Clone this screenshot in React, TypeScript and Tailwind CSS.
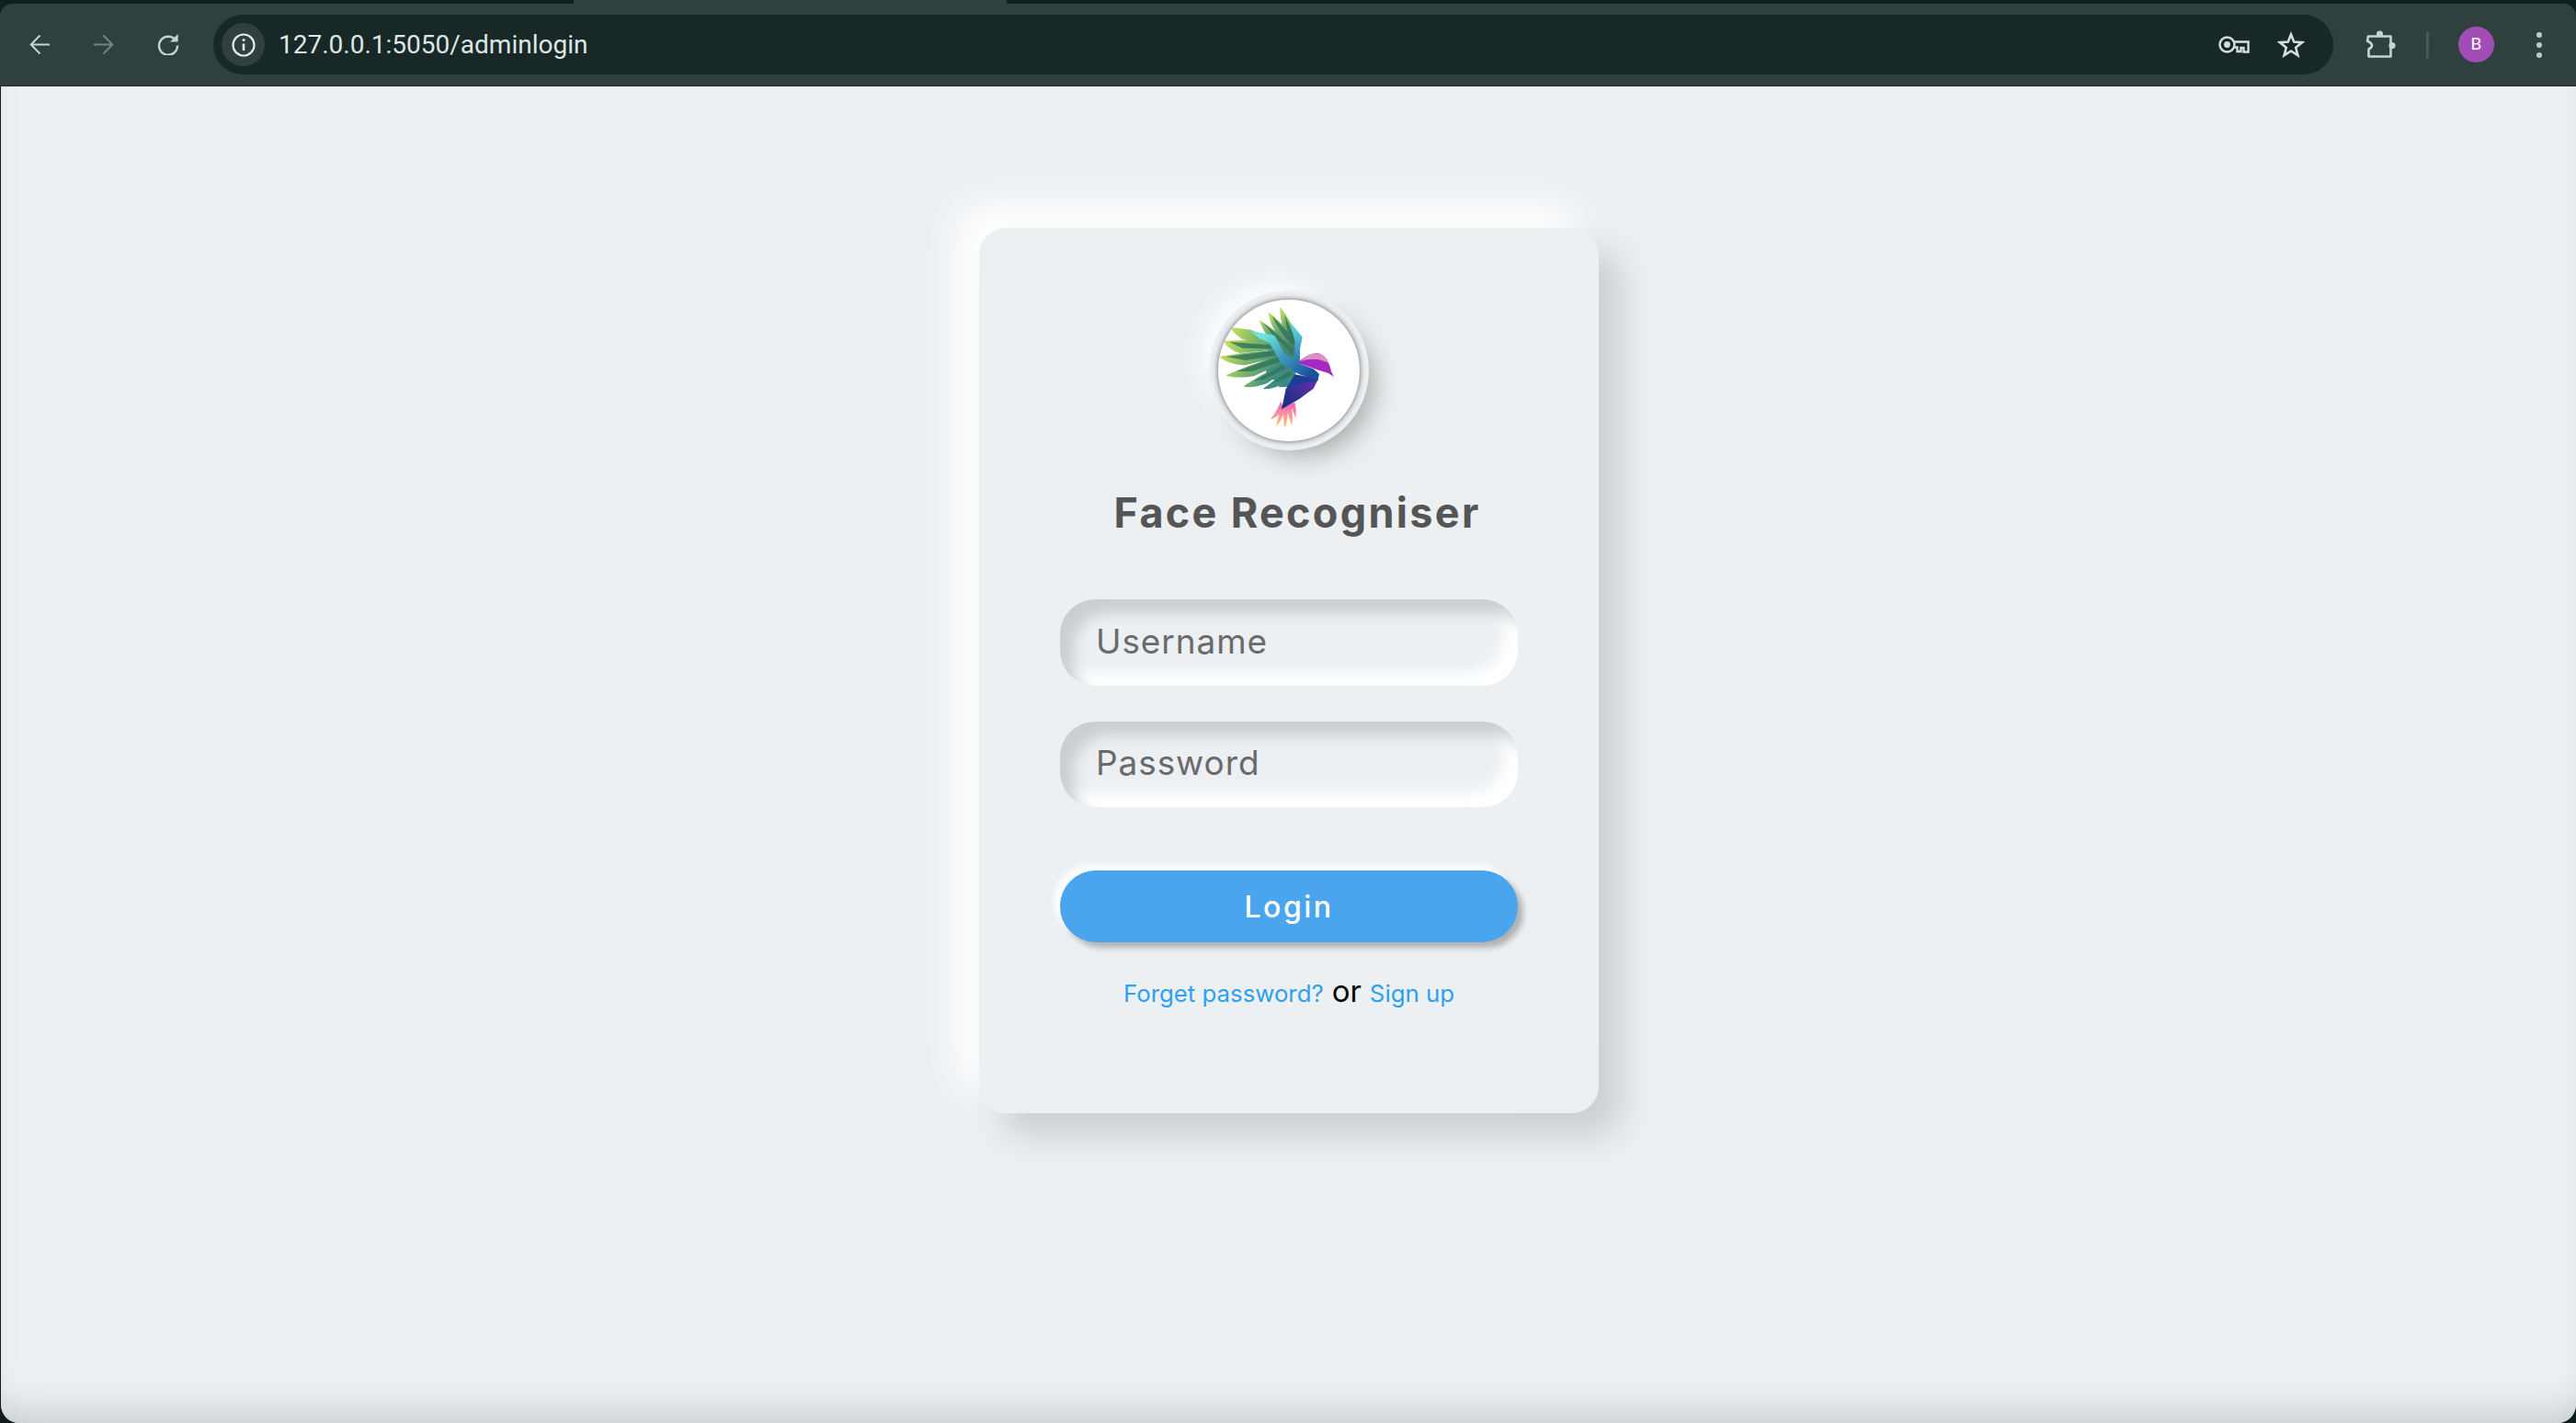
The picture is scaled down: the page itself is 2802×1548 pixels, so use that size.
import React from "react";

function Bird({ id }: { id: string }) {
  const lower = [
    "M178 170 L240 178 L330 212 L302 226 L215 205 Q190 190 178 170Z",
    "M155 214 L240 212 L305 226 L312 240 L205 250 Q172 240 155 214Z",
    "M142 265 L215 254 L322 244 L328 264 L222 290 Q170 288 142 265Z",
    "M165 325 L230 298 L330 264 L342 284 L250 326 Q200 334 165 325Z",
    "M222 360 L270 330 L345 290 L358 305 L292 350 Q255 364 222 360Z",
    "M285 368 L330 335 L366 310 L386 322 L350 350 Q315 368 285 368Z",
    "M335 362 L385 322 L388 340 L362 360Z",
  ];
  const upper = [
    "M338 105 Q370 140 386 205 L376 228 Q338 170 338 105Z",
    "M300 120 Q345 155 386 208 L382 242 Q310 190 300 120Z",
    "M272 148 Q325 178 382 238 L380 264 Q295 220 272 148Z",
  ];
  const stripes = [
    "M172 216 L305 226 L312 238 L215 236Z",
    "M160 264 L320 244 L326 260 L225 276Z",
    "M195 312 L330 264 L340 280 L245 312Z",
    "M250 345 L345 291 L356 303 L285 338Z",
    "M305 352 L366 311 L382 322 L340 342Z",
    "M352 128 L386 205 L378 222 Q358 180 352 128Z",
    "M310 130 L386 208 L382 234 Q335 185 310 130Z",
    "M282 154 L382 238 L380 256 Q325 212 282 154Z",
  ];
  const tail = [
    "M340 410 Q325 445 305 468 Q335 462 348 432Z",
    "M342 430 Q328 465 325 492 Q345 470 355 432Z",
    "M350 430 Q345 470 352 497 Q365 470 362 425Z",
    "M358 425 Q365 465 375 487 Q382 460 372 420Z",
    "M368 420 Q380 440 388 465 Q392 440 385 413Z",
  ];
  return (
    <svg viewBox="135 78 462 462" className="block h-full w-full">
      <defs>
        <linearGradient id={`${id}fe`} gradientUnits="userSpaceOnUse" x1="150" y1="200" x2="370" y2="290">
          <stop offset="0" stopColor="#d2e55a" />
          <stop offset="0.4" stopColor="#84ba66" />
          <stop offset="0.85" stopColor="#3f9080" />
          <stop offset="1" stopColor="#3a8a88" />
        </linearGradient>
        <linearGradient id={`${id}upg`} gradientUnits="userSpaceOnUse" x1="320" y1="105" x2="375" y2="255">
          <stop offset="0" stopColor="#d6e85f" />
          <stop offset="0.45" stopColor="#6aa96c" />
          <stop offset="1" stopColor="#3b7f70" />
        </linearGradient>
        <linearGradient id={`${id}band`} gradientUnits="userSpaceOnUse" x1="290" y1="190" x2="430" y2="330">
          <stop offset="0" stopColor="#6fe5e2" />
          <stop offset="0.45" stopColor="#3f9cc0" />
          <stop offset="1" stopColor="#1b4f9e" />
        </linearGradient>
        <linearGradient id={`${id}up`} gradientUnits="userSpaceOnUse" x1="390" y1="150" x2="395" y2="285">
          <stop offset="0" stopColor="#66e3e3" />
          <stop offset="1" stopColor="#2c73b5" />
        </linearGradient>
        <linearGradient id={`${id}body`} gradientUnits="userSpaceOnUse" x1="450" y1="330" x2="350" y2="430">
          <stop offset="0" stopColor="#6d2db0" />
          <stop offset="1" stopColor="#12307f" />
        </linearGradient>
        <linearGradient id={`${id}tail`} gradientUnits="userSpaceOnUse" x1="350" y1="410" x2="350" y2="495">
          <stop offset="0" stopColor="#ee55b5" />
          <stop offset="0.55" stopColor="#fb9aa0" />
          <stop offset="1" stopColor="#fdd04f" />
        </linearGradient>
      </defs>
      <path d="M300 225 L385 205 L400 290 L385 325 L350 352 L290 330Z" fill="#3f8a78" />
      {lower.map((d) => (
        <path key={d} d={d} fill={`url(#${id}fe)`} stroke={`url(#${id}fe)`} strokeWidth="4" strokeLinejoin="round" />
      ))}
      {upper.map((d) => (
        <path key={d} d={d} fill={`url(#${id}upg)`} stroke={`url(#${id}upg)`} strokeWidth="3" strokeLinejoin="round" />
      ))}
      {stripes.map((d) => (
        <path key={d} d={d} fill="#35755c" opacity="0.85" />
      ))}
      {tail.map((d) => (
        <path key={d} d={d} fill={`url(#${id}tail)`} />
      ))}
      <path d="M385 325 L462 336 L446 368 L400 402 L342 436 L356 370Z" fill={`url(#${id}body)`} />
      <path d="M356 372 L385 322 L462 336 L456 346 Q400 345 356 372Z" fill="#1d3c96" />
      <path d="M368 148 L410 200 L402 240 L402 285 L384 276 L386 215Z" fill={`url(#${id}up)`} />
      <path d="M238 179 L320 195 L332 218 L348 250 L396 285 L446 304 L465 320 L460 342 L400 322 L342 287 L316 242 L304 220 L270 205Z" fill={`url(#${id}band)`} strokeLinejoin="round" />
      <path d="M396 285 Q420 256 456 252 Q492 256 504 312 L513 330 L495 318 L464 308Z" fill="#a42abf" />
      <path d="M405 278 Q425 256 456 252 Q484 254 497 285 Q470 272 445 272 Q425 272 405 278Z" fill="#de8fc4" />
    </svg>
  );
}

function IconBack({ className }: { className: string }) {
  return (
    <svg viewBox="0 0 24 24" className={className} fill="none" stroke="currentColor" strokeWidth="2.1">
      <path d="M23 12H2M12 1.5 1.8 12 12 22.5" />
    </svg>
  );
}

function IconReload() {
  return (
    <svg viewBox="0 0 24 24" className="-mt-[2px] h-[24px] w-[24px] text-[#c3d5d1]" fill="none" stroke="currentColor" strokeWidth="2.4">
      <path d="M20.5 8.5A10 10 0 1 0 22 13.5" />
      <path d="M22.6 1v8.6H14" fill="currentColor" stroke="none" />
    </svg>
  );
}

function IconInfo() {
  return (
    <svg viewBox="0 0 26 26" className="h-[26px] w-[26px] text-[#e4ebe9]" fill="none" stroke="currentColor" strokeWidth="2.2">
      <circle cx="13" cy="13" r="11.5" />
      <path d="M13 11.5V19" strokeWidth="2.6" />
      <circle cx="13" cy="7.6" r="1.5" fill="currentColor" stroke="none" />
    </svg>
  );
}

function IconKey() {
  return (
    <svg viewBox="0 0 34 20" className="h-[20px] w-[34px] text-[#d3dfdc]" fill="none" stroke="currentColor" strokeWidth="2.4">
      <circle cx="9.5" cy="9.5" r="8" />
      <circle cx="9.5" cy="9.5" r="3.4" fill="currentColor" stroke="none" />
      <path d="M17.5 6.5H32.6V17.5H27.5V13H24.5V17H20.5V12.5H17.5" />
    </svg>
  );
}

function IconStar() {
  return (
    <svg viewBox="0 0 30 29" className="h-[29px] w-[30px] text-[#d3dfdc]" fill="none" stroke="currentColor" strokeWidth="2.6" strokeLinejoin="miter">
      <path d="M15 3.5 18.2 11.6 27 12.2 20.2 17.8 22.4 26.2 15 21.5 7.6 26.2 9.8 17.8 3 12.2 11.8 11.6Z" />
    </svg>
  );
}

function IconPuzzle() {
  return (
    <svg viewBox="0 0 33 32" className="h-[32px] w-[33px] text-[#c3d5d1]" fill="none" stroke="currentColor" strokeWidth="2.6" strokeLinejoin="round">
      <path d="M3 6.5H27.5V28.5H3.5V20.5Q7.5 18.5 7 16T2 11.5Z" />
      <circle cx="15.5" cy="4" r="3.6" fill="currentColor" stroke="none" />
      <circle cx="29" cy="16.5" r="3.6" fill="currentColor" stroke="none" />
    </svg>
  );
}

export default function App() {
  return (
    <div className="flex h-[1548px] w-[2802px] flex-col overflow-hidden bg-[#101c1b] font-['Inter',sans-serif]">
      <header className="h-[94px] shrink-0 bg-[#0f211f]">
        <div className="flex h-[4px]">
          <div className="w-[624px]" />
          <div className="w-[471px] bg-[#2f403e]" />
        </div>
        <div className="flex h-[90px] items-center rounded-t-[14px] border-b border-b-[#1c2725] bg-[#2f403e]">
          <div className="flex w-[232px] shrink-0 items-center pl-[32px]">
            <IconBack className="h-[23px] w-[23px] text-[#c3d5d1]" />
            <div className="ml-[46px] rotate-180">
              <IconBack className="h-[23px] w-[23px] text-[#6e8581]" />
            </div>
            <div className="ml-[47px]">
              <IconReload />
            </div>
          </div>
          <div className="flex h-[65px] w-[2306px] shrink-0 items-center rounded-full bg-[#182827] pl-[9px] pr-[31px]">
            <div className="flex h-[47px] w-[47px] items-center justify-center rounded-full bg-[#2f403e]">
              <IconInfo />
            </div>
            <span className="ml-[15px] font-['Roboto',sans-serif] text-[28px] leading-none text-[#dfe6e4]">127.0.0.1:5050/adminlogin</span>
            <div className="ml-auto flex items-center gap-[30px]">
              <IconKey />
              <IconStar />
            </div>
          </div>
          <div className="ml-[35px]">
            <IconPuzzle />
          </div>
          <div className="ml-[33px] h-[30px] w-[3px] rounded-full bg-[#475a57]" />
          <div className="ml-[32px] flex h-[39px] w-[39px] items-center justify-center rounded-full bg-[#a14db5] font-['Roboto',sans-serif] text-[19px] text-white">B</div>
          <div className="ml-[46px] flex flex-col gap-[5px]">
            <div className="h-[6px] w-[6px] rounded-full bg-[#b9ccc8]" />
            <div className="h-[6px] w-[6px] rounded-full bg-[#b9ccc8]" />
            <div className="h-[6px] w-[6px] rounded-full bg-[#b9ccc8]" />
          </div>
        </div>
      </header>

      <main className="ml-px flex-1 rounded-b-[20px] bg-[#ecf0f3] pl-px pt-[154px] shadow-[inset_0_-32px_40px_-24px_#c4c7ca]">
        <div className="mx-auto flex h-[963px] w-[674px] flex-col rounded-[29px] bg-[#ecf0f3] px-[88px] pt-[78px] shadow-[25px_25px_38px_#cbced1,-25px_-25px_38px_#ffffff]">
          <div className="mx-auto h-[154px] w-[154px] shrink-0 overflow-hidden rounded-full bg-white shadow-[0_0_6px_#5f5f5f,0_0_0_10px_#ecf0f3,15px_15px_29px_#a7aaa7,-15px_-15px_29px_#ffffff]">
            <Bird id="main" />
          </div>
          <h1 className="mt-[50px] pl-[18px] text-center text-[45px] font-bold leading-[56px] tracking-[2.3px] text-[#555555]">Face Recogniser</h1>
          <form className="mt-[66px] flex flex-col">
            <div className="h-[94px] rounded-[38px] pl-[39px] shadow-[inset_15px_15px_15px_#cbced1,inset_-15px_-15px_15px_#ffffff]">
              <input placeholder="Username" className="-mt-[2px] h-full w-full bg-transparent text-[37px] tracking-[0.9px] text-[#666666] outline-none placeholder:text-[#6a6a6a]" />
            </div>
            <div className="mt-[39px] h-[93px] rounded-[38px] pl-[39px] shadow-[inset_15px_15px_15px_#cbced1,inset_-15px_-15px_15px_#ffffff]">
              <input placeholder="Password" className="-mt-[2px] h-full w-full bg-transparent text-[37px] tracking-[0.9px] text-[#666666] outline-none placeholder:text-[#6a6a6a]" />
            </div>
            <button type="button" className="mt-[69px] h-[78px] rounded-full border-t border-t-[#2ea3f2] bg-[#4aa5ee] text-[32px] font-medium tracking-[2.5px] text-white shadow-[6px_6px_6px_#b1b1b1,-6px_-6px_6px_#ffffff]">Login</button>
          </form>
          <p className="mt-[29px] flex items-baseline justify-center gap-[9px] text-[#050505]">
            <a className="text-[25.8px] text-[#2ea0f2]">Forget password?</a>
            <span className="text-[33px]">or</span>
            <a className="text-[25.8px] text-[#2ea0f2]">Sign up</a>
          </p>
        </div>
      </main>
    </div>
  );
}
